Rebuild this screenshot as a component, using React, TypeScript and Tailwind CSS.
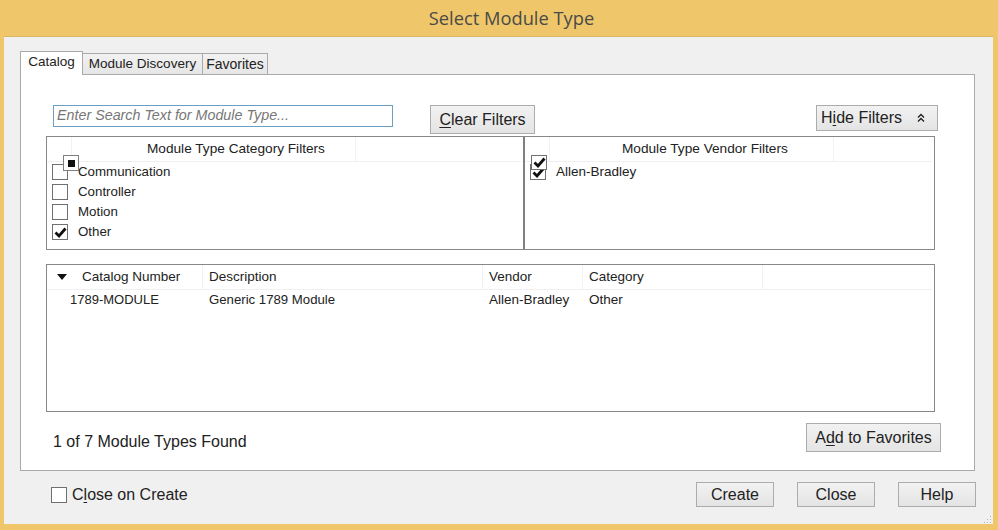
import React from "react";

function Check() {
  return (
    <svg width="13" height="11" viewBox="0 0 13 11" className="block">
      <path d="M1.5 5.5 L5 9 L11.5 1.5" fill="none" stroke="#111" strokeWidth="2.8" />
    </svg>
  );
}

function Box({ checked }: { checked?: boolean }) {
  return (
    <div className="w-4 h-4 shrink-0 bg-white border border-[#707070] flex items-center justify-center">
      {checked ? <Check /> : null}
    </div>
  );
}

function FilterRow({ label, checked }: { label: string; checked?: boolean }) {
  return (
    <div className="h-5 flex items-center pl-[5px] gap-[10px] text-[13.3px] text-[#222]">
      <Box checked={checked} />
      <span>{label}</span>
    </div>
  );
}

function HeaderStrip({ label, pad }: { label: string; pad: string }) {
  return (
    <div className="h-[25px] flex border-b border-[#f0f0f0] text-[13.65px] text-[#222] mr-[2px]">
      <div className="w-[25px] border-r border-[#f2f2f2]" />
      <div className={`w-[284px] border-r border-[#f2f2f2] flex items-center ${pad}`}>{label}</div>
      <div className="flex-1" />
    </div>
  );
}

function Btn({ className, children }: { className: string; children: React.ReactNode }) {
  return (
    <button className={`border border-[#acacac] bg-gradient-to-b from-[#f2f2f2] to-[#e4e4e4] text-[#222] flex items-center justify-center shrink-0 ${className}`}>
      {children}
    </button>
  );
}

export default function App() {
  return (
    <div className="w-[998px] h-[530px] bg-[#efc76a] flex flex-col overflow-hidden font-['Liberation_Sans',Arial,sans-serif]">
      <div className="h-[36px] shrink-0 flex items-center justify-center pl-[25px] text-[18.3px] text-[#4a4a48] font-['Open_Sans',sans-serif]">
        Select Module Type
      </div>
      <div className="relative ml-[4px] mr-[5px] h-[488px] bg-[#f0f0f0] border-t border-[#d9b765] flex flex-col">
        {/* tabs */}
        <div className="h-[37px] shrink-0 pl-[16px] flex items-end text-[13.5px] text-[#222]">
          <div className="relative z-10 h-[24px] w-[63px] -mb-px bg-white border border-b-0 border-[#aaaaaa] flex items-center justify-center pb-[3px]">
            Catalog
          </div>
          <div className="h-[21px] w-[121px] border border-b-0 border-[#aaaaaa] bg-gradient-to-b from-[#f2f2f2] to-[#e6e6e6] flex items-center justify-center -ml-px">
            Module Discovery
          </div>
          <div className="h-[21px] w-[66px] border border-b-0 border-[#aaaaaa] bg-gradient-to-b from-[#f2f2f2] to-[#e6e6e6] flex items-center justify-center -ml-px text-[14px]">
            Favorites
          </div>
        </div>
        {/* tab body */}
        <div className="ml-[16px] w-[955px] h-[397px] bg-white border border-[#aaaaaa] flex flex-col pt-[30px]">
          <div className="h-[31px] shrink-0 flex items-start pl-[32px] pr-[36px]">
            <div className="w-[340px] h-[22px] border border-[#6d9fc4] flex items-center pl-[3px] text-[14.3px] italic text-[#777]">
              Enter Search Text for Module Type...
            </div>
            <Btn className="ml-[37px] w-[105px] h-[29px] text-[16px]">
              <span><u className="underline-offset-2">C</u>lear Filters</span>
            </Btn>
            <Btn className="ml-auto w-[122px] h-[26px] text-[16px] pr-[7px]">
              <span>H<u className="underline-offset-2">i</u>de Filters</span>
              <svg width="10" height="10" viewBox="0 0 10 10" className="ml-[14px]">
                <path d="M2 4.5 L5 1.5 L8 4.5 M2 8.5 L5 5.5 L8 8.5" fill="none" stroke="#222" strokeWidth="1.4" />
              </svg>
            </Btn>
          </div>
          {/* filters */}
          <div className="relative ml-[25px] w-[889px] h-[114px] shrink-0 border border-[#888888] flex">
            <div className="w-[478px] border-r-2 border-[#808080]">
              <HeaderStrip label="Module Type Category Filters" pad="pl-[75px]" />
              <FilterRow label="Communication" />
              <FilterRow label="Controller" />
              <FilterRow label="Motion" />
              <FilterRow label="Other" checked />
            </div>
            <div className="flex-1">
              <HeaderStrip label="Module Type Vendor Filters" pad="pl-[72px]" />
              <div className="h-5 flex items-center pl-[5px] gap-[10px] text-[13.5px] text-[#222]">
                <Box checked />
                <span>Allen-Bradley</span>
              </div>
            </div>
            <div className="absolute left-[16px] top-[18px] w-4 h-4 bg-white border border-[#808080] flex items-center justify-center">
              <div className="w-[7px] h-[7px] bg-[#111]" />
            </div>
            <div className="absolute left-[484px] top-[18px] w-4 h-[15px] bg-white border border-[#707070] flex items-center justify-center">
              <Check />
            </div>
          </div>
          {/* table */}
          <div className="ml-[25px] mt-[14px] w-[889px] h-[148px] shrink-0 border border-[#888888] text-[13.5px] text-[#222]">
            <div className="h-[25px] flex border-b border-[#f0f0f0] mr-[2px]">
              <div className="w-[156px] border-r border-[#f2f2f2] flex items-center">
                <svg width="10" height="6" viewBox="0 0 10 6" className="ml-[10px] mr-[15px]">
                  <path d="M0 0 H10 L5 6 Z" fill="#111" />
                </svg>
                Catalog Number
              </div>
              <div className="w-[280px] border-r border-[#f2f2f2] flex items-center pl-[6px]">Description</div>
              <div className="w-[100px] border-r border-[#f2f2f2] flex items-center pl-[6px]">Vendor</div>
              <div className="w-[180px] border-r border-[#f2f2f2] flex items-center pl-[6px]">Category</div>
            </div>
            <div className="h-[20px] flex items-center">
              <div className="w-[156px] pl-[23px] text-[13px]">1789-MODULE</div>
              <div className="w-[280px] pl-[6px] text-[13.2px]">Generic 1789 Module</div>
              <div className="w-[100px] pl-[6px]">Allen-Bradley</div>
              <div className="w-[180px] pl-[6px]">Other</div>
            </div>
          </div>
          {/* status */}
          <div className="mt-[11px] flex items-center h-[29px] shrink-0 pl-[32px] pr-[33px] justify-between">
            <span className="text-[16px] text-[#222] pt-[9px]">1 of 7 Module Types Found</span>
            <Btn className="w-[135px] h-[29px] text-[16px]">
              <span>A<u className="underline-offset-2">d</u>d to Favorites</span>
            </Btn>
          </div>
        </div>
        {/* footer */}
        <div className="flex items-center h-[25px] mt-[11px] pl-[47px] pr-[17px]">
          <Box />
          <span className="ml-[5px] text-[16px] text-[#222]">C<u className="underline-offset-2">l</u>ose on Create</span>
          <Btn className="ml-auto w-[78px] h-[25px] text-[16px]">Create</Btn>
          <Btn className="ml-[23px] w-[78px] h-[25px] text-[16px]">Close</Btn>
          <Btn className="ml-[23px] w-[78px] h-[25px] text-[16px]">Help</Btn>
        </div>
        <svg width="8" height="8" viewBox="0 0 8 8" className="absolute right-[1px] bottom-[1px]">
          <path d="M6 1h1v1H6zM3 4h1v1H3zM6 4h1v1H6zM0 7h1v1H0zM3 7h1v1H3zM6 7h1v1H6z" fill="#b8b8b8" />
        </svg>
      </div>
    </div>
  );
}
